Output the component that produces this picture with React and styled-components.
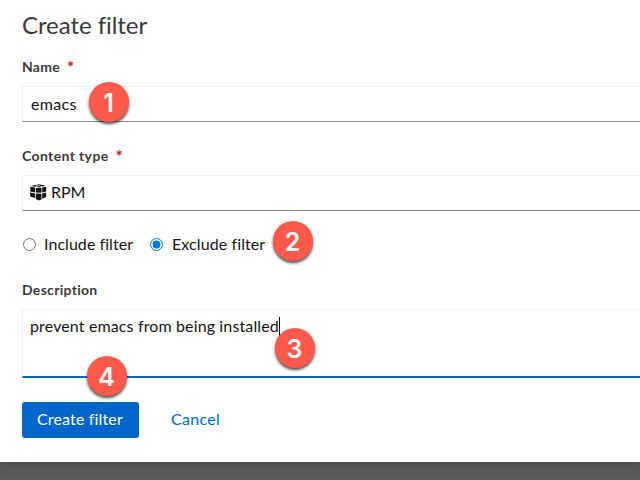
import React from "react";
import styled, { createGlobalStyle } from "styled-components";

const GlobalStyle = createGlobalStyle`
  *, *::before, *::after { box-sizing: border-box; }
  body { margin: 0; overflow: hidden; background: #5a5a5a; }
`;

const Screen = styled.div`
  position: relative;
  width: 640px;
  height: 480px;
  overflow: hidden;
  background: linear-gradient(#555 462px, #5c5c5c 480px);
  font-family: Lato, "Open Sans", sans-serif;
  font-size: 16px;
  line-height: 24px;
  color: #151515;
`;

const Modal = styled.main`
  height: 462px;
  padding: 9px 0 0 22px;
  background: #fff;
  box-shadow: 0 0 8px rgba(3, 3, 3, 0.24);
`;

const Title = styled.h1`
  margin: 0;
  height: 47px;
  font-size: 24px;
  font-weight: 400;
  line-height: 32px;
  letter-spacing: -0.05px;
  color: #3a3a3a;
`;

const Group = styled.section`
  height: ${(p) => p.$height}px;
`;

const Label = styled.label`
  display: flex;
  height: 30px;
  font-size: 14px;
  font-weight: 700;
  line-height: 21px;
  letter-spacing: ${(p) => p.$tracking}px;
  color: #3a3a3a;
`;

const Required = styled.span`
  margin: 1px 0 0 7px;
  font-size: 17px;
  color: #c9190b;
`;

const Field = styled.div`
  display: flex;
  align-items: center;
  width: 700px;
  height: 36px;
  padding: 0 8px;
  border: 1px solid #f0f0f0;
  border-bottom-color: #8a8d90;
  letter-spacing: ${(p) => p.$tracking}px;
`;

const SelectField = styled(Field)`
  padding-bottom: 2px;
`;

const TextArea = styled(Field)`
  align-items: flex-start;
  height: 69px;
  padding: 4px 7px;
  border-bottom: 2px solid #06c;
`;

const Caret = styled.span`
  width: 1px;
  height: 19px;
  margin-top: 3px;
  background: #000;
`;

const RadioRow = styled.div`
  display: flex;
  align-items: center;
  height: 24px;
  padding-left: 1px;
  margin-bottom: 23px;
`;

const Option = styled.label`
  display: flex;
  align-items: center;
  gap: ${(p) => p.$gap}px;
  width: ${(p) => p.$width}px;
  letter-spacing: ${(p) => p.$tracking}px;
  white-space: nowrap;
`;

const Radio = styled.input`
  flex: none;
  width: 13px;
  height: 13px;
  margin: 0;
  accent-color: #0075ff;
`;

const Actions = styled.footer`
  display: flex;
  gap: 16px;
`;

const Button = styled.button`
  width: ${(p) => p.$width}px;
  height: 36px;
  padding: 0 1px 2px 0;
  border: 0;
  border-radius: 3px;
  background: ${(p) => (p.$primary ? "#06c" : "transparent")};
  color: ${(p) => (p.$primary ? "#fff" : "#06c")};
  font: inherit;
  letter-spacing: ${(p) => p.$tracking}px;
`;

const Marker = styled.span`
  position: absolute;
  left: ${(p) => p.$x - 20}px;
  top: ${(p) => p.$y - 20}px;
  display: flex;
  align-items: center;
  justify-content: center;
  width: 40px;
  height: 40px;
  padding: 1px 1px 0 0;
  border-radius: 50%;
  background: #ff594c;
  box-shadow: 0 2px 3px rgba(0, 0, 0, 0.7);
  color: #fff;
  font: 600 25px/40px Inter, sans-serif;
`;

const IconSvg = styled.svg`
  flex: none;
  margin: 0 4px 0 -1px;
`;

function PackageIcon() {
  return (
    <IconSvg width="17" height="17" viewBox="0 0 17 17" fill="#151515">
      <path d="M.3 2.8 5 3.4v5L.3 7.5ZM0 8.4l5 1v4.5L.5 12.7Z" />
      <path d="m5.8 3.9 5.7-.2v5l-5.7-.3ZM5.8 9.5l5.7.2v5.8l-2.9.9-2.8-1.3Z" />
      <path d="m12.2 3.4 4-.6v4.7l-4 1ZM12.2 9.5l4-1v4.4l-4 1.8Z" />
      <path d="M.9 2 5.3.9l2.6.6-2.5 1.2ZM6.3 2.9l2.2-1 3.4.8-2.4.6ZM6.5.7 8.5.3l6.9 1.3-2.6.9Z" />
    </IconSvg>
  );
}

const markers = [
  { n: 1, x: 109, y: 102 },
  { n: 2, x: 293, y: 241 },
  { n: 3, x: 295, y: 348 },
  { n: 4, x: 107, y: 376 },
];

export default function App() {
  return (
    <Screen>
      <GlobalStyle />
      <Modal>
        <Title>Create filter</Title>
        <Group $height={89}>
          <Label $tracking={0.25}>Name <Required>*</Required></Label>
          <Field $tracking={0.35}>emacs</Field>
        </Group>
        <Group $height={87}>
          <Label $tracking={0.38}>Content type <Required>*</Required></Label>
          <SelectField $tracking={-0.1}><PackageIcon />RPM</SelectField>
        </Group>
        <RadioRow>
          <Option $gap={8} $width={127} $tracking={0.05}><Radio type="radio" name="mode" />Include filter</Option>
          <Option $gap={9} $width={120} $tracking={0.1}><Radio type="radio" name="mode" defaultChecked />Exclude filter</Option>
        </RadioRow>
        <Group $height={123}>
          <Label $tracking={0.3}>Description</Label>
          <TextArea $tracking={0.13}>prevent emacs from being installed<Caret /></TextArea>
        </Group>
        <Actions>
          <Button $primary $width={117} $tracking={0.15}>Create filter</Button>
          <Button $width={82} $tracking={0.3}>Cancel</Button>
        </Actions>
      </Modal>
      {markers.map((m) => <Marker key={m.n} $x={m.x} $y={m.y}>{m.n}</Marker>)}
    </Screen>
  );
}
